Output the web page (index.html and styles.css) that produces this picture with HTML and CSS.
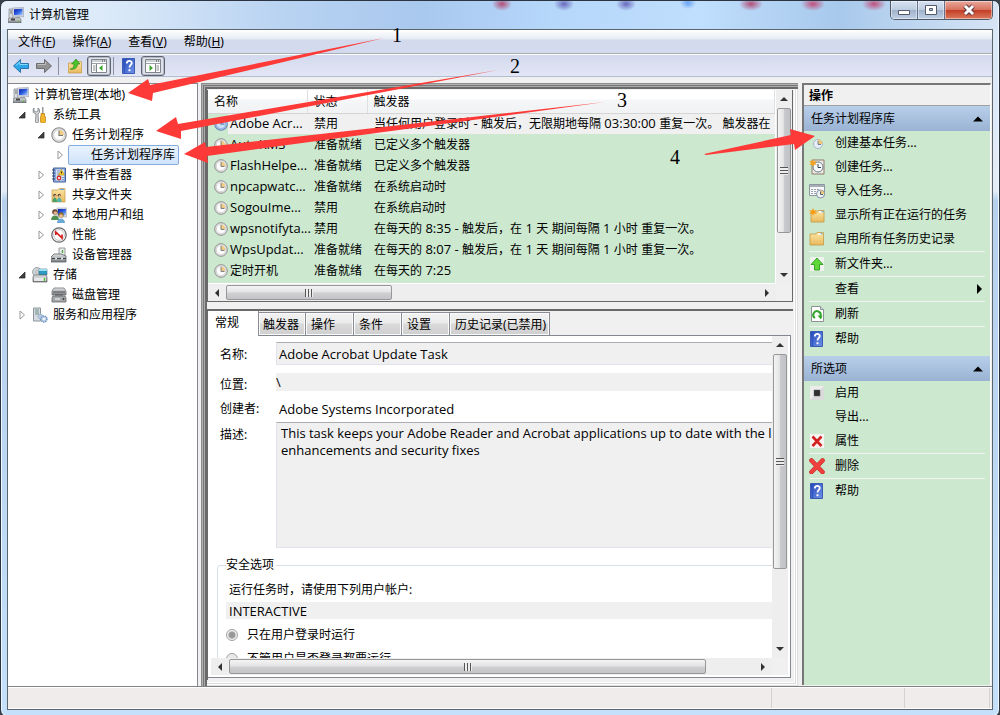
FILE: index.html
```html
<!DOCTYPE html>
<html lang="zh-CN">
<head>
<meta charset="utf-8">
<title>计算机管理</title>
<link rel="stylesheet" href="styles.css">
</head>
<body>
<svg class="sprite" aria-hidden="true">
  <defs>
    <linearGradient id="gBlue" x1="0" y1="0" x2="1" y2="1"><stop offset="0" stop-color="#0a1fae"/><stop offset=".5" stop-color="#2c5ee0"/><stop offset="1" stop-color="#b8d4ff"/></linearGradient>
    <linearGradient id="gFolder" x1="0" y1="0" x2="0" y2="1"><stop offset="0" stop-color="#fbe6a6"/><stop offset="1" stop-color="#e9b95c"/></linearGradient>
    <linearGradient id="gGrey" x1="0" y1="0" x2="0" y2="1"><stop offset="0" stop-color="#e4e6e8"/><stop offset="1" stop-color="#767b80"/></linearGradient>
    <linearGradient id="gHelp" x1="0" y1="0" x2="1" y2="1"><stop offset="0" stop-color="#2448b4"/><stop offset="1" stop-color="#6f93ea"/></linearGradient>
  </defs>
  <symbol id="computer" viewBox="0 0 16 16">
    <path d="M1 2h4v10H1z" fill="#d9dcdf" stroke="#7b8086" stroke-width=".7"/><path d="M2 4h2M2 6h2" stroke="#6b7075"/>
    <path d="M4.500 1l11 -.5v9.500l-11-1z" fill="#d3d6de" stroke="#9aa0ab" stroke-width=".6"/><path d="M6 2.200l8.500-.4v6.700L6 8z" fill="url(#gBlue)"/>
    <path d="M7 10h5v2H7z" fill="#b5b9bd"/>
    <path d="M0 12l2-1h10l1 1.500V16H0z" fill="url(#gGrey)" stroke="#60656a" stroke-width=".6"/><path d="M3 11.500h4v2H3z" fill="#444"/><circle cx="10.500" cy="14" r=".8" fill="#58c534"/>
  </symbol>
  <symbol id="tools" viewBox="0 0 16 16">
    <path d="M2 1v3l2 1 2-1V1l1.500 1.500v3L6 7l.5 7.500a1.500 1.500 0 0 1-3 0L4 7 1.200 5.500v-3z" fill="#d5d8da" stroke="#767a7e" stroke-width=".8"/>
    <path d="M10 0h1.500v7H10z" fill="#999"/><path d="M9 6.500h3.500V9l1 1v5l-1 1H9.500l-1-1v-5L9 9z" fill="#f2b62b" stroke="#b97a0b" stroke-width=".7"/>
  </symbol>
  <symbol id="clock" viewBox="0 0 16 16">
    <circle cx="8" cy="8" r="7.200" fill="#e6e6e6" stroke="#8a8a8a" stroke-width="1.100"/><circle cx="8" cy="8" r="5.400" fill="#fbfbfb" stroke="#bbb" stroke-width=".6"/>
    <path d="M8 8V3a5 5 0 0 1 5 5z" fill="#f1cd82"/><path d="M8 3.500V8.500h4" fill="none" stroke="#777" stroke-width="1.100"/>
  </symbol>
  <symbol id="clockblue" viewBox="0 0 16 16">
    <circle cx="8" cy="8" r="7.200" fill="#a9c8ef" stroke="#6c87b5" stroke-width="1.200"/><circle cx="8" cy="8" r="5.300" fill="#c9dff7" stroke="#7d9ccb" stroke-width=".6"/><path d="M8 3.500V8h4" fill="none" stroke="#4568a5" stroke-width="1.200"/>
  </symbol>
  <symbol id="event" viewBox="0 0 16 16">
    <path d="M2.500 1h12v14h-12z" fill="#8aa8dc" stroke="#44649f"/><path d="M5 2.500h8v11H5z" fill="#d5e0f5"/><path d="M6 4h3M6 6h2M6 8h3M11 10.500h2M11 12.500h2" stroke="#6f89bd" stroke-width=".8"/><path d="M1 3h3M1 6h3M1 9h3M1 12h3" stroke="#32466e"/>
    <path d="M10.500 2.500l3 5.500h-6z" fill="#ffd62e" stroke="#b48b00" stroke-width=".6"/><path d="M10.500 4.500v2" stroke="#222"/><circle cx="8" cy="11" r="2.400" fill="#d42d2d"/><path d="M7 10l2 2m0-2l-2 2" stroke="#fff" stroke-width=".8"/>
  </symbol>
  <symbol id="share" viewBox="0 0 16 16">
    <path d="M1 3h6l1-1.500h6V15H1z" fill="url(#gFolder)" stroke="#c39a45" stroke-width=".7"/><path d="M9 2.500h4" stroke="#5fa6e0"/>
    <circle cx="3.800" cy="8.300" r="1.500" fill="#5b4030"/><circle cx="4.200" cy="9" r="1" fill="#e8bd95"/><circle cx="8.300" cy="8.300" r="1.500" fill="#5b4030"/><circle cx="8.600" cy="9" r="1" fill="#e8bd95"/><path d="M1.500 15c0-6 4.500-6 4.500 0z" fill="#46a06a"/><path d="M6 15c0-6 4.500-6 4.500 0z" fill="#52b3ae"/>
  </symbol>
  <symbol id="users" viewBox="0 0 16 16">
    <path d="M6 1h10v9H6z" fill="#dfe2ea" stroke="#9ba1ad" stroke-width=".6"/><path d="M7 2h8v6.500H7z" fill="url(#gBlue)"/>
    <circle cx="4" cy="5" r="2.800" fill="#6b4a35"/><circle cx="4.300" cy="6" r="1.800" fill="#e3b28d"/><path d="M0 13c0-6 8-6 8 0z" fill="#4f8f4f"/>
    <circle cx="10" cy="8" r="2.700" fill="#8a6b2c"/><circle cx="10" cy="9" r="1.800" fill="#edc19b"/><path d="M6 16c0-6 8-6 8 0z" fill="#6aa8d8"/>
  </symbol>
  <symbol id="perf" viewBox="0 0 16 16">
    <circle cx="8" cy="8" r="7.200" fill="#fff" stroke="#666" stroke-width="1.200"/><circle cx="8" cy="8" r="5.400" fill="#fff" stroke="#999" stroke-width=".6"/><path d="M4.800 8V5L11 11V7.500" fill="none" stroke="#d41f1f" stroke-width="1.700"/>
  </symbol>
  <symbol id="device" viewBox="0 0 16 16">
    <path d="M8 1h6v9H8z" fill="#e8eaec" stroke="#888" stroke-width=".8"/><path d="M11.500 3v3" stroke="#49ae3a" stroke-width="1.300"/><path d="M1 9l2-2h7l5 2v6H0v-5z" fill="url(#gGrey)" stroke="#5d6267" stroke-width=".8"/><path d="M1 11.500h14" stroke="#444"/><path d="M4 10.500h2v2H4zM10 10.500h2v2h-2z" fill="#ddd"/>
  </symbol>
  <symbol id="storage" viewBox="0 0 16 16">
    <circle cx="5" cy="5" r="4.500" fill="#cfd4d6" stroke="#868b8e" stroke-width=".7"/><circle cx="5" cy="5" r="1.300" fill="#fff" stroke="#777" stroke-width=".5"/><path d="M7 2h8v6H7z" fill="#2a9cc4" stroke="#3d6a7a" stroke-width=".6"/><path d="M7 2h8v2H7z" fill="#9edcf0"/>
    <path d="M1 10l1-2h12l1 2v5H1z" fill="url(#gGrey)" stroke="#666" stroke-width=".7"/><path d="M2 10.500h12V14H2z" fill="#e5e7e8"/><path d="M12.500 11v3" stroke="#49c22e" stroke-width="1.400"/>
  </symbol>
  <symbol id="disk" viewBox="0 0 16 16">
    <path d="M3 1h10l2 3v4H1V4z" fill="url(#gGrey)" stroke="#777" stroke-width=".8"/><path d="M2 5h12M4 8h8" stroke="#555"/><path d="M2 9h12l1 2v4H1v-4z" fill="#a5a8ab" stroke="#666" stroke-width=".8"/><path d="M4 12h5" stroke="#eee" stroke-width="1.200"/><circle cx="12.500" cy="12" r=".9" fill="#333"/>
  </symbol>
  <symbol id="services" viewBox="0 0 16 16">
    <path d="M1.500 1h7v13h-7z" fill="#d5dbe0" stroke="#8c969c"/><path d="M3 3h4M3 5h4M3 7h4" stroke="#6f8f8a"/><circle cx="8.500" cy="9.500" r="2.400" fill="#b7cbe2" stroke="#7f9cc0" stroke-dasharray="1.200 .8"/><circle cx="12" cy="12" r="2.900" fill="#c9d9ec" stroke="#6f93c0" stroke-width="1.600" stroke-dasharray="1.300 .7"/><circle cx="12" cy="12" r=".9" fill="#fff"/>
  </symbol>
  <symbol id="back" viewBox="0 0 16 16"><path d="M.5 8L7.500 1.500v4h8v5h-8v4z" fill="#2da6e8" stroke="#14629c" stroke-width=".8"/><path d="M3 7.500L6.700 4v2.500h7.800" fill="none" stroke="#8fdcff" stroke-width=".9"/></symbol>
  <symbol id="forward" viewBox="0 0 16 16"><path d="M15.500 8L8.500 1.500v4h-8v5h8v4z" fill="#929292" stroke="#5b5b5b" stroke-width=".8"/><path d="M1.500 6.500h8V4" fill="none" stroke="#c4c4c4" stroke-width=".9"/></symbol>
  <symbol id="upfolder" viewBox="0 0 16 16"><path d="M1.500 5h6l1-1.500h6V15h-13z" fill="url(#gFolder)" stroke="#c39a45" stroke-width=".7"/><path d="M3 11c3 0 4-2 4-5H4.500L9 1l4 5h-2.500c0 4-3 6-7.500 5z" fill="#4ec22d" stroke="#28811a" stroke-width=".6"/></symbol>
  <symbol id="paneL" viewBox="0 0 16 14"><path d="M.5.5h15v13H.5z" fill="#fff" stroke="#7f858c"/><path d="M1 2h14M1 4.500h14" stroke="#9ba1a8"/><path d="M11 2h1M13 2h1" stroke="#333"/><path d="M5.500 5v8" stroke="#7f858c"/><path d="M2 7h2.500M2 9h2.500M2 11h2.500" stroke="#888"/><path d="M11.500 6v6L8 9z" fill="#39a32b"/></symbol>
  <symbol id="paneR" viewBox="0 0 16 14"><path d="M.5.5h15v13H.5z" fill="#fff" stroke="#7f858c"/><path d="M1 2h14M1 4.500h14" stroke="#9ba1a8"/><path d="M11 2h1M13 2h1" stroke="#333"/><path d="M10.500 5v8" stroke="#7f858c"/><path d="M11.500 7H14M11.500 9H14M11.500 11H14" stroke="#888"/><path d="M4.500 6v6L8 9z" fill="#39a32b"/></symbol>
  <symbol id="help" viewBox="0 0 16 16"><path d="M1.500.5h12v15h-12z" fill="url(#gHelp)" stroke="#3b5bb5"/><path d="M3.500 1v14" stroke="#2f55c4"/><path d="M5.800 5.500c0-3.500 5-3.200 5-.5 0 2-2.300 2-2.300 4.500" fill="none" stroke="#fff" stroke-width="1.800"/><path d="M7.500 11.200h2v2h-2z" fill="#fff"/></symbol>
  <symbol id="basic" viewBox="0 0 16 16"><circle cx="9" cy="9" r="4.500" fill="#e9eef7" stroke="#a3b5cd"/><path d="M9 9V4.500A4.500 4.500 0 0 1 13.500 9z" fill="#efc675"/><path d="M9 6v3.500h3" fill="none" stroke="#6f7f9a"/></symbol>
  <symbol id="newtask" viewBox="0 0 16 16"><path d="M3 1h12v14H3z" fill="#eceae4" stroke="#8f7a68"/><circle cx="9" cy="8" r="5" fill="#f8fbfd" stroke="#697b86"/><path d="M9 5v3.500h3" fill="none" stroke="#345"/><path d="M4 0l1 2.500L8 2 6 4l2 2-3-.5L4 8 3 5.500 0 6l2-2-2-2 3 .5z" fill="#f6a21b"/></symbol>
  <symbol id="import" viewBox="0 0 16 16"><path d="M.5 1.500h15v11H.5z" fill="#f6f8fa" stroke="#8d969e"/><path d="M1 3h14" stroke="#a5adb5" stroke-width="2"/><path d="M2 6.500h9M2 8.500h7M2 10.500h6" stroke="#98a1aa" stroke-dasharray="2 1"/><circle cx="11.500" cy="11" r="4" fill="#edf1f5" stroke="#8793a0"/><path d="M11.500 11V7.500a3.500 3.500 0 0 1 3.500 3.500z" fill="#efc675"/><path d="M11.500 8.500V11.500H14" fill="none" stroke="#567"/></symbol>
  <symbol id="folder" viewBox="0 0 16 16"><path d="M1 3h6l1-1.500h6.500V14H1z" fill="url(#gFolder)" stroke="#c39a45" stroke-width=".8"/><path d="M9 3h4" stroke="#fff" stroke-width="1.500"/><path d="M11.500 2.800h2" stroke="#4e9be0"/></symbol>
  <symbol id="runfolder" viewBox="0 0 16 16"><path d="M2 5h6l1-1.500h6V15H2z" fill="url(#gFolder)" stroke="#c39a45" stroke-width=".8"/><path d="M10 5h4" stroke="#fff" stroke-width="1.500"/><path d="M12.500 4.800h2" stroke="#4e9be0"/><path d="M4 1l1 2.500L8 3 6 5l2 2-3-.5L4 9 3 6.500 0 7l2-2-2-2 3 .5z" fill="#f79a12"/></symbol>
  <symbol id="up" viewBox="0 0 16 16"><path d="M1 1h14v14H1z" fill="#f0f2ee"/><path d="M8 2L14 8.500h-3.500V14h-5V8.500H2z" fill="#5fd83a" stroke="#2c9a1d" stroke-width=".9"/></symbol>
  <symbol id="refresh" viewBox="0 0 16 16"><path d="M2.500.5h9l3 3v12h-12z" fill="#fff" stroke="#8c9296"/><path d="M11.500.5v3h3" fill="#ddd" stroke="#8c9296"/><path d="M6 12A3.700 3.700 0 1 1 11.500 10" fill="none" stroke="#31a52c" stroke-width="2"/><path d="M8.500 9.500h5l-1.500 4z" fill="#31a52c"/></symbol>
  <symbol id="enable" viewBox="0 0 16 16"><path d="M1 1h14v14H1z" fill="#dadada"/><path d="M1 1h14L1 15z" fill="#ececec"/><path d="M5 5h6v6H5z" fill="#2e2e2e" stroke="#666" stroke-width=".5"/></symbol>
  <symbol id="prop" viewBox="0 0 16 16"><path d="M1 1h14v14H1z" fill="#f6f3f2"/><path d="M3.500 3.500l9 9.500m0-9.500l-9 9.500" stroke="#d22121" stroke-width="2.600"/></symbol>
  <symbol id="del" viewBox="0 0 16 16"><path d="M2.500 2.500l11 11.500m0-11.500l-11 11.500" stroke="#b92a2a" stroke-width="4.600" stroke-linecap="round"/><path d="M2.500 2.500l11 11.500m0-11.500l-11 11.500" stroke="#f0403d" stroke-width="3.600" stroke-linecap="round"/></symbol>
  <symbol id="open" viewBox="0 0 12 12"><path d="M9 3v6H3z" fill="#404040" stroke="#222" stroke-width=".7"/></symbol>
  <symbol id="closed" viewBox="0 0 12 12"><path d="M4 2l4.500 4L4 10z" fill="#fff" stroke="#989898"/></symbol>
  <symbol id="tri-up" viewBox="0 0 10 6"><path d="M0 5.500L5 .5l5 5z"/></symbol>
</svg>

<div class="window">
  <header class="titlebar">
    <svg class="ico"><use href="#computer"/></svg>
    <h1 class="title">计算机管理</h1>
    <div class="winbtns">
      <button class="wb" aria-label="最小化"><svg width="14" height="12"><path d="M1.500 6.500h11v4h-11z" fill="#fff" stroke="#555b68"/></svg></button>
      <button class="wb" aria-label="最大化"><svg width="14" height="12"><path d="M1.500 1.500h11v9h-11zM5.500 4.500h3v2h-3z" fill="#fff" stroke="#555b68" fill-rule="evenodd"/></svg></button>
      <button class="wb close" aria-label="关闭"><svg width="14" height="12"><path d="M3 2l8 8m0-8l-8 8" stroke="#5b3540" stroke-width="5"/><path d="M3 2l8 8m0-8l-8 8" stroke="#fff" stroke-width="3"/></svg></button>
    </div>
  </header>

  <div class="client">
    <nav class="menubar">
      <button>文件(<u>F</u>)</button><button>操作(<u>A</u>)</button><button>查看(<u>V</u>)</button><button>帮助(<u>H</u>)</button>
    </nav>
    <div class="toolbar">
      <button class="tb" aria-label="后退"><svg class="ico"><use href="#back"/></svg></button>
      <button class="tb" aria-label="前进"><svg class="ico"><use href="#forward"/></svg></button>
      <span class="tsep"></span>
      <button class="tb" aria-label="向上"><svg class="ico"><use href="#upfolder"/></svg></button>
      <button class="tb on" aria-label="控制台树"><svg class="pane-ico"><use href="#paneL"/></svg></button>
      <span class="tsep"></span>
      <button class="tb" aria-label="帮助"><svg class="ico"><use href="#help"/></svg></button>
      <button class="tb on" aria-label="操作窗格"><svg class="pane-ico"><use href="#paneR"/></svg></button>
    </div>

    <main class="main">
      <ul class="tree">
        <li class="l0"><svg class="ico"><use href="#computer"/></svg><span>计算机管理(本地)</span></li>
        <li class="l1"><svg class="tw"><use href="#open"/></svg><svg class="ico"><use href="#tools"/></svg><span>系统工具</span></li>
        <li class="l2"><svg class="tw"><use href="#open"/></svg><svg class="ico"><use href="#clock"/></svg><span>任务计划程序</span></li>
        <li class="l3"><svg class="tw"><use href="#closed"/></svg><span class="selected">任务计划程序库</span></li>
        <li class="l2"><svg class="tw"><use href="#closed"/></svg><svg class="ico"><use href="#event"/></svg><span>事件查看器</span></li>
        <li class="l2"><svg class="tw"><use href="#closed"/></svg><svg class="ico"><use href="#share"/></svg><span>共享文件夹</span></li>
        <li class="l2"><svg class="tw"><use href="#closed"/></svg><svg class="ico"><use href="#users"/></svg><span>本地用户和组</span></li>
        <li class="l2"><svg class="tw"><use href="#closed"/></svg><svg class="ico"><use href="#perf"/></svg><span>性能</span></li>
        <li class="l2"><svg class="tw"></svg><svg class="ico"><use href="#device"/></svg><span>设备管理器</span></li>
        <li class="l1"><svg class="tw"><use href="#open"/></svg><svg class="ico"><use href="#storage"/></svg><span>存储</span></li>
        <li class="l2"><svg class="tw"></svg><svg class="ico"><use href="#disk"/></svg><span>磁盘管理</span></li>
        <li class="l1"><svg class="tw"><use href="#closed"/></svg><svg class="ico"><use href="#services"/></svg><span>服务和应用程序</span></li>
      </ul>

      <section class="center">
        <div class="listpane">
          <div class="list">
            <table>
              <colgroup><col class="c1"><col class="c2"><col></colgroup>
              <thead><tr><th>名称</th><th>状态</th><th>触发器</th></tr></thead>
              <tbody>
                <tr class="cur"><td><svg class="ric"><use href="#clockblue"/></svg><span class="en">Adobe Acr...</span></td><td>禁用</td><td>当任何用户登录时<span class="en"> - </span>触发后，无限期地每隔<span class="en"> 03:30:00 </span>重复一次。<span class="en"> </span>触发器在</td></tr>
                <tr><td><svg class="ric"><use href="#clock"/></svg><span class="en">AutoKMS</span></td><td>准备就绪</td><td>已定义多个触发器</td></tr>
                <tr><td><svg class="ric"><use href="#clock"/></svg><span class="en">FlashHelpe...</span></td><td>准备就绪</td><td>已定义多个触发器</td></tr>
                <tr><td><svg class="ric"><use href="#clock"/></svg><span class="en">npcapwatc...</span></td><td>准备就绪</td><td>在系统启动时</td></tr>
                <tr><td><svg class="ric"><use href="#clock"/></svg><span class="en">SogouIme...</span></td><td>禁用</td><td>在系统启动时</td></tr>
                <tr><td><svg class="ric"><use href="#clock"/></svg><span class="en">wpsnotifyta...</span></td><td>禁用</td><td>在每天的<span class="en"> 8:35 - </span>触发后，在<span class="en"> 1 </span>天<span class="en"> </span>期间每隔<span class="en"> 1 </span>小时<span class="en"> </span>重复一次。</td></tr>
                <tr><td><svg class="ric"><use href="#clock"/></svg><span class="en">WpsUpdat...</span></td><td>准备就绪</td><td>在每天的<span class="en"> 8:07 - </span>触发后，在<span class="en"> 1 </span>天<span class="en"> </span>期间每隔<span class="en"> 1 </span>小时<span class="en"> </span>重复一次。</td></tr>
                <tr><td><svg class="ric"><use href="#clock"/></svg>定时开机</td><td>准备就绪</td><td>在每天的<span class="en"> 7:25</span></td></tr>
              </tbody>
            </table>
          </div>
          <div class="sb v"><i class="a up"></i><i class="thumb t-list-v"></i><i class="rest r-list-v"></i><i class="a down"></i></div>
          <div class="sb h"><i class="a left"></i><i class="thumb t-list-h"></i><i class="rest r-list-h"></i><i class="a right"></i></div>
        </div>

        <div class="detail">
          <div class="tabs" role="tablist">
            <button class="tab active" role="tab">常规</button><button class="tab" role="tab">触发器</button><button class="tab" role="tab">操作</button><button class="tab" role="tab">条件</button><button class="tab" role="tab">设置</button><button class="tab" role="tab">历史记录(已禁用)</button>
          </div>
          <div class="tabbody">
            <div class="view">
              <form class="form">
                <div class="fields">
                  <label for="f-name">名称:</label><input id="f-name" class="box" value="Adobe Acrobat Update Task" readonly>
                  <label for="f-loc" class="low">位置:</label><input id="f-loc" class="flat" value="\" readonly>
                  <label for="f-author" class="who">创建者:</label><output id="f-author" class="author">Adobe Systems Incorporated</output>
                  <label for="f-desc" class="top">描述:</label><textarea id="f-desc" readonly>This task keeps your Adobe Reader and Acrobat applications up to date with the latest
enhancements and security fixes</textarea>
                </div>
                <fieldset>
                  <legend>安全选项</legend>
                  <label for="f-user" class="acct">运行任务时，请使用下列用户帐户:</label>
                  <input id="f-user" class="user" value="INTERACTIVE" readonly>
                  <label class="radio"><input type="radio" name="run" checked>只在用户登录时运行</label>
                  <label class="radio"><input type="radio" name="run">不管用户是否登录都要运行</label>
                </fieldset>
              </form>
            </div>
            <div class="sb v"><i class="a up"></i><i class="thumb t-form-v"></i><i class="rest r-form-v"></i><i class="a down"></i></div>
            <div class="sb h"><i class="a left"></i><i class="thumb t-form-h"></i><i class="rest r-form-h"></i><i class="a right"></i></div>
            <div class="corner"></div>
          </div>
        </div>
      </section>

      <aside class="actions">
        <h2>操作</h2>
        <h3>任务计划程序库<svg class="tri"><use href="#tri-up"/></svg></h3>
        <div class="group">
          <button><svg class="ico"><use href="#basic"/></svg>创建基本任务...</button>
          <button><svg class="ico"><use href="#newtask"/></svg>创建任务...</button>
          <button><svg class="ico"><use href="#import"/></svg>导入任务...</button>
          <button><svg class="ico"><use href="#runfolder"/></svg>显示所有正在运行的任务</button>
          <button><svg class="ico"><use href="#folder"/></svg>启用所有任务历史记录</button>
          <hr>
          <button><svg class="ico"><use href="#up"/></svg>新文件夹...</button>
          <hr>
          <button><svg class="ico"></svg>查看<svg class="sub" viewBox="0 0 5 10"><path d="M0 0l5 5-5 5z"/></svg></button>
          <hr>
          <button><svg class="ico"><use href="#refresh"/></svg>刷新</button>
          <hr>
          <button><svg class="ico"><use href="#help"/></svg>帮助</button>
        </div>
        <h3>所选项<svg class="tri"><use href="#tri-up"/></svg></h3>
        <div class="group">
          <button><svg class="ico"><use href="#enable"/></svg>启用</button>
          <button><svg class="ico"></svg>导出...</button>
          <button><svg class="ico"><use href="#prop"/></svg>属性</button>
          <hr>
          <button><svg class="ico"><use href="#del"/></svg>删除</button>
          <hr>
          <button><svg class="ico"><use href="#help"/></svg>帮助</button>
        </div>
      </aside>
    </main>

    <footer class="status"><span></span><span></span><span></span></footer>
  </div>
</div>

<svg class="notes" width="1000" height="715" viewBox="0 0 1000 715">
  <g fill="#fd3a37">
    <path d="M128 93L148 79 150 85 384 38 153 93 152 101z"/>
    <path d="M156 131L176 117 178 124 498 70 181 131 181 139z"/>
    <path d="M184 154L205 142 206 147 605 102 207 156 208 163z"/>
    <path d="M704 154L791 135 790 129 815 136 795 150 794 144 706 155z"/>
  </g>
  <g class="digits"><text x="392" y="42">1</text><text x="510" y="73">2</text><text x="617" y="107">3</text><text x="670" y="164">4</text></g>
</svg>
</body>
</html>
```

FILE: styles.css
```css
* { box-sizing: border-box; }
body {
  margin: 0;
  font: 12px/18px "Noto Sans", "Noto Sans CJK SC", sans-serif;
  color: #000;
  background: #3a4148;
}
button, input, textarea { font: inherit; color: inherit; margin: 0; }
button { border: 0; background: none; padding: 0; text-align: left; white-space: nowrap; }
h1, h2, h3, ul { margin: 0; padding: 0; font-size: 12px; font-weight: 400; }
i { font-style: normal; }
svg { display: block; flex: none; }
.sprite { position: absolute; width: 0; height: 0; }
.ico { width: 16px; height: 16px; }
.en { font-family: "Open Sans", "Noto Sans", sans-serif; font-size: 13px; line-height: 14px; white-space: pre; }

.window {
  display: flex;
  flex-direction: column;
  min-height: 100vh;
  border: 1px solid #2b3440;
  border-radius: 7px;
  padding: 0 6px 6px;
  background: linear-gradient(#d8e6f6, #e3edf8 190px, #b6d0ee 200px, #bbd6f3 60%, #c4e0fb);
  box-shadow: inset 0 0 0 1px #eef6ff;
}

/* title bar */
.titlebar {
  display: flex;
  align-items: center;
  height: 28px;
  margin: 0 -5px;
  padding: 0 5px 0 6px;
  border-radius: 6px 6px 0 0;
  background:
    radial-gradient(10px 7px at 500px 3px, #b04e78, transparent),
    radial-gradient(10px 7px at 562px 3px, #6a69bb, transparent),
    radial-gradient(10px 7px at 624px 3px, #6a69bb, transparent),
    radial-gradient(8px 6px at 686px 2px, #67a2f5, transparent),
    radial-gradient(12px 7px at 749px 3px, #b04e78, transparent),
    radial-gradient(12px 7px at 811px 3px, #c0507c, transparent),
    radial-gradient(12px 7px at 872px 3px, #c0507c, transparent),
    linear-gradient(90deg, #e8f1fb, #d9e8f8 12%, #b9d3f2 28%, #a9c8ee 42%, #b5d7fa 55%, #c0defd 70%, #a8c9ec 84%, #d6e4f4);
}
.title { flex: 1; margin-left: 5px; }
.winbtns {
  display: flex;
  align-self: flex-start;
  height: 19px;
  border: 1px solid #4f5a6b;
  border-top: 0;
  border-radius: 0 0 5px 5px;
  overflow: hidden;
}
.wb {
  display: flex;
  align-items: center;
  justify-content: center;
  width: 27px;
  border-right: 1px solid #65708a;
  background: linear-gradient(#d7e3f2, #bdcce0 48%, #9fb1ca 50%, #bfd0e6);
  box-shadow: inset 0 0 0 1px #ffffff70;
}
.wb.close { width: 47px; border: 0; background: linear-gradient(#e9a99c, #d9725f 48%, #c23c24 50%, #dc7a5c); }

/* client */
.client {
  flex: 1;
  display: flex;
  flex-direction: column;
  border: 1px solid #5c646c;
  background: #f0f0f0;
}
.menubar {
  display: flex;
  gap: 17px;
  height: 24px;
  padding-left: 10px;
  border-bottom: 1px solid #a9adb5;
  background: linear-gradient(#fff, #e6ebf4 9px, #d4daed 10px);
}
.toolbar {
  display: flex;
  align-items: center;
  height: 23px;
  padding-left: 5px;
  border-top: 1px solid #fff;
  border-bottom: 1px solid #b3bcd0;
  background: linear-gradient(#d3d9ed, #e2e6f5);
}
.tb { display: flex; align-items: center; justify-content: center; width: 16px; height: 20px; }
.tb + .tb { margin-left: 7px; }
.tb + .tb.on { width: 24px; margin-left: 4px; border: 1px solid #5f6570; border-radius: 3px; background: #dfe2ea; box-shadow: inset 0 0 0 1px #b5bac6; }
.pane-ico { width: 16px; height: 14px; }
.tsep { width: 1px; height: 18px; margin: 0 8px 0 6px; background: #8a909d; }
.tb.on + .tsep { margin: 0 7px 0 2px; }

.main { flex: 1; display: flex; margin-top: 6px; }

/* tree */
.tree {
  width: 190px;
  flex: none;
  padding-top: 1px;
  list-style: none;
  background: #fff;
  border-top: 1px solid #828790;
  border-right: 1px solid #828790;
}
.tree li { display: flex; align-items: center; height: 20px; white-space: nowrap; }
.tree .ico { margin-right: 5px; }
.tw { width: 12px; height: 12px; margin-right: 4px; }
.l0 { padding-left: 5px; }
.l1 { padding-left: 8px; }
.l2 { padding-left: 27px; }
.l3 { padding-left: 46px; }
.l3 .tw { margin-right: 2px; }
.selected {
  padding: 0 3px 0 22px;
  border: 1px solid #84acdd;
  border-radius: 2px;
  background: linear-gradient(#eaf3fe, #cfe3fb);
}

/* center frame */
.center {
  flex: 1;
  min-width: 0;
  display: flex;
  flex-direction: column;
  margin: 0 4px 0 3px;
  padding: 7px 5px 6px 6px;
  background: #f0f0f0;
  box-shadow:
    inset 1px 1px #8c8c8c, inset 2px 2px #b0b0b0, inset 3px 3px #777, inset 4px 4px #aaa, inset 6px 6px #6a6a6a,
    inset -1px -1px #e0e0e0, inset -2px -2px #fff, inset -3px -3px #dcdcdc, inset -4px -4px #fff;
}
.listpane, .tabbody {
  display: grid;
  grid-template-columns: minmax(0, 1fr) 16px;
  background: #f0f0f0;
}
.listpane {
  grid-template-rows: 194px 17px;
  margin-bottom: 7px;
  border: 1px solid #696969;
  border-top: 0;
}
.list { overflow: hidden; background: #cce8cf; border-right: 1px solid #fff; border-bottom: 1px solid #fff; }
table { width: 100%; border-collapse: collapse; table-layout: fixed; }
.c1 { width: 99px; }
.c2 { width: 60px; }
th {
  height: 23px;
  padding: 2px 0 0 6px;
  font-weight: 400;
  text-align: left;
  border-right: 1px solid #dfe0e2;
  border-bottom: 1px solid #d5d5d5;
  background: linear-gradient(#fff 9px, #f5f6f8 10px, #f1f2f4);
}
td { height: 21px; padding: 1px 0 0 7px; white-space: nowrap; line-height: 16px; }
td:first-child { padding-left: 6px; }
.ric { display: inline-block; width: 14px; height: 14px; margin-right: 2px; vertical-align: -3px; }
.cur td { background: #f0f0f0; }
.cur td:first-child { background: linear-gradient(90deg, #cce8cf 20px, #f0f0f0 20px); }

/* scroll bars */
.sb { display: flex; background: #eeeeee; }
.sb.v { flex-direction: column; padding: 0 1px; }
.sb.h { height: 17px; padding: 1px 0; }
.a { display: flex; align-items: center; justify-content: center; flex: 0 0 18px; }
.a::before { content: ""; border: 4px solid transparent; }
.up::before { border-top: 0; border-bottom-color: #333; }
.down::before { border-bottom: 0; border-top-color: #333; }
.left::before { border-left: 0; border-right-color: #333; }
.right::before { border-right: 0; border-left-color: #333; }
.thumb { display: flex; align-items: center; justify-content: center; border: 1px solid #979797; border-radius: 2px; }
.v .thumb { background: linear-gradient(90deg, #f4f4f4, #e4e4e6 45%, #c8c9cd 55%, #c1c2c6); }
.h .thumb { background: linear-gradient(#f4f4f4, #e4e4e6 45%, #cfcfd2 55%, #c4c4c8); }
.thumb::before { content: ""; width: 8px; height: 8px; }
.v .thumb::before { background: repeating-linear-gradient(#555 0 1px, #eee 1px 3px); }
.h .thumb::before { background: repeating-linear-gradient(90deg, #555 0 1px, #eee 1px 3px); }
.t-list-v { flex: 125; } .r-list-v { flex: 33; }
.t-list-h { flex: 165; } .r-list-h { flex: 367; }
.t-form-v { flex: 214; } .r-form-v { flex: 71; }
.t-form-h { flex: 478; } .r-form-h { flex: 48; }

/* detail */
.detail {
  flex: 1;
  display: flex;
  flex-direction: column;
  border-top: 2px solid #696969;
  border-left: 1px solid #696969;
  padding: 0 2px 2px 0;
}
.tabs { display: flex; align-items: flex-end; }
.tab {
  width: 48px;
  height: 23px;
  padding: 1px 0 0 5px;
  border: 1px solid #898c95;
  border-bottom: 0;
  border-left-width: 0;
  background: linear-gradient(#f2f2f2, #ebebeb 45%, #dadada 50%, #cfcfcf);
  box-shadow: inset 0 0 0 1px #fbfbfb;
}
.tab:nth-child(2) { width: 47px; padding-left: 4px; }
.tab:last-child { width: auto; padding-right: 3px; }
.tab.active { width: 51px; height: 25px; margin-bottom: -1px; padding: 0 0 2px 7px; background: #fff; box-shadow: none; border-top: 0; z-index: 1; }
.tabbody {
  flex: 1;
  grid-template-rows: minmax(0, 1fr) 17px;
  border: 1px solid #828790;
  border-left: 0;
  padding: 0 2px 2px 0;
  background: #fff;
}
.tabbody .sb.h { margin-left: 3px; }
.corner { background: #f0f0f0; }
.view { overflow: hidden; height: 322px; min-height: 100%; }
.form { width: calc(100% + 60px); }
.fields { display: grid; grid-template-columns: 56px 1fr; padding: 6px 0 0 12px; align-items: center; }
.fields label { padding-top: 2px; }
.fields .low { padding-top: 4px; }
.fields .who { padding: 0 0 4px; }
.box, .flat, .author, textarea, .user { font-family: "Open Sans", "Noto Sans", sans-serif; font-size: 13px; border-radius: 0; outline: 0; }
.box, textarea { border: 1px solid #e2e3ea; border-top-color: #abadb3; background: #f0f0f0; }
.box { height: 23px; padding: 0 2px; }
.flat { height: 18px; margin: 8px 0 9px; padding: 0; border: 0; background: #f0f0f0; }
.author { padding-left: 3px; margin-bottom: 4px; }
.fields .top { align-self: start; padding-top: 4px; }
textarea { height: 126px; padding: 2px 4px; resize: none; overflow: hidden; line-height: 17px; white-space: pre; }
fieldset { margin: 8px 0 0 9px; padding: 7px 0 0 8px; border: 1px solid #d5dfe5; border-radius: 3px; min-width: 0; }
legend { padding: 0 2px 0 0; }
fieldset label { display: flex; align-items: center; }
.acct { padding-left: 3px; margin-bottom: 3px; }
.user { display: block; width: 100%; height: 17px; padding: 0 3px; border: 0; background: #f0f0f0; }
.radio { height: 24px; margin-top: 4px; }
.radio + .radio { margin-top: 0; }
.radio input {
  appearance: none;
  width: 12px;
  height: 12px;
  margin-right: 9px;
  border: 1px solid #a2a2a2;
  border-radius: 50%;
  background: #e9e9e9;
}
.radio input:checked { background: radial-gradient(circle, #999 3px, #eee 4px); }

/* actions */
.actions {
  width: 189px;
  flex: none;
  margin: 0 1px 1px 0;
  border-top: 2px solid #777;
  border-left: 2px solid #777;
  border-right: 1px solid #fff;
  background: #cce8cf;
}
.actions h2 { height: 21px; padding: 2px 0 0 5px; font-weight: 700; line-height: 18px; background: #f0f0f0; border-bottom: 1px solid #a0a0a0; }
.actions h3 {
  display: flex;
  align-items: center;
  justify-content: space-between;
  height: 25px;
  padding: 0 7px;
  background: linear-gradient(#b8cfe9, #9ab3d4);
}
.tri { width: 10px; height: 6px; }
.group { padding-bottom: 5px; }
.group button { display: flex; align-items: center; width: 100%; height: 24px; padding-left: 5px; }
.group .ico { margin-right: 10px; }
.group hr { height: 1px; margin: 0 5px; border: 0; background: #f2f2f2; }
.sub { width: 5px; height: 10px; margin: 0 8px 0 auto; }

/* status bar */
.status { display: flex; height: 23px; border-top: 1px solid #828282; background: #f0eceb; box-shadow: inset 0 1px #fff, inset 0 -1px #fff; }
.status span { border-right: 1px solid #d5d3d2; margin: 1px 0; }
.status span:first-child { flex: 1; }
.status span:nth-child(2) { width: 133px; }
.status span:last-child { width: 85px; margin-right: 2px; }

/* callouts drawn over the window */
.notes { position: absolute; left: 0; top: 0; pointer-events: none; }
.digits { font: 20px "Liberation Serif", serif; }
```
